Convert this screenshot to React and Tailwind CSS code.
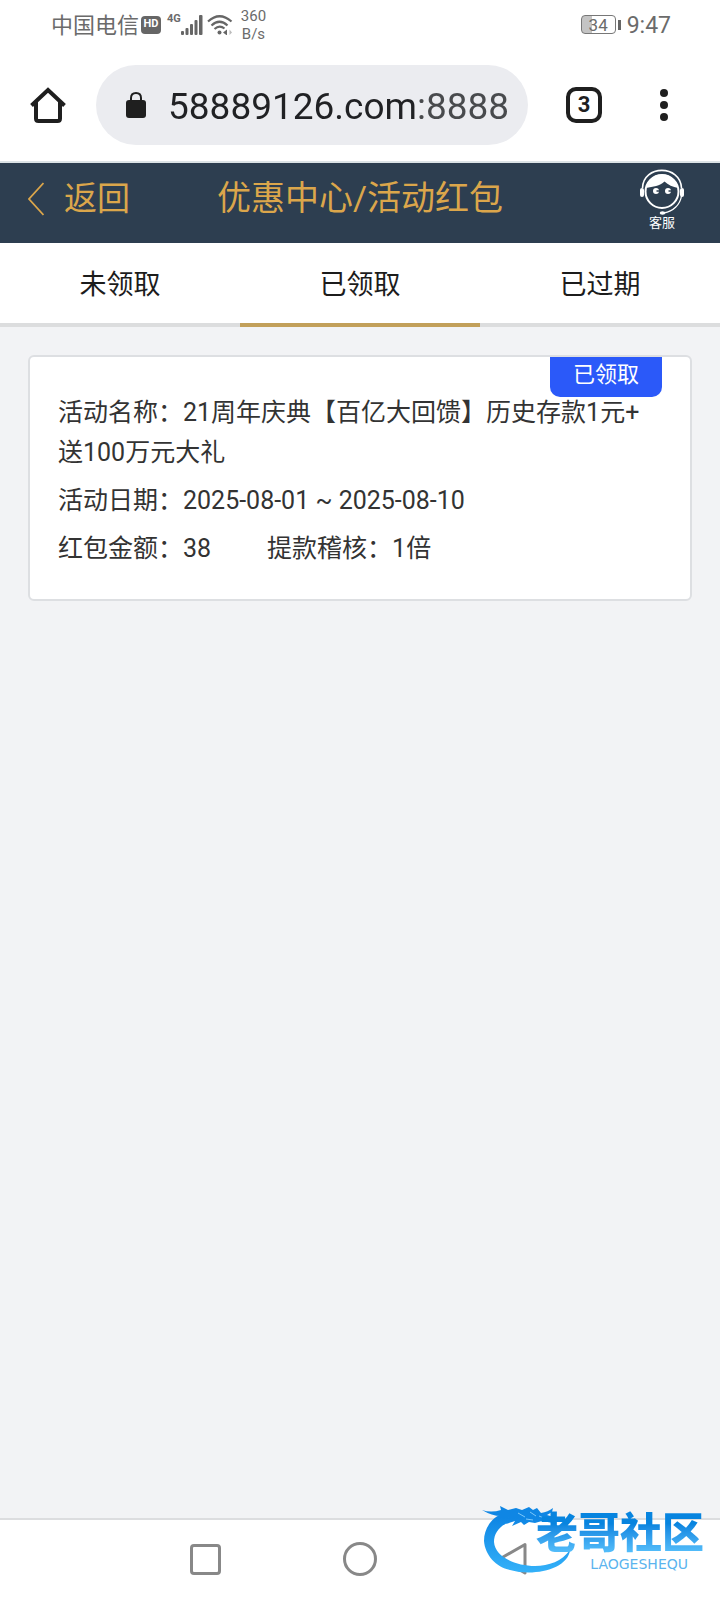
import { useState } from "react";

const TABS = ["未领取", "已领取", "已过期"];

const SANS = "font-['Roboto','Noto_Sans_CJK_SC',sans-serif]";

function StatusBar() {
  return (
    <div className="flex h-[49px] items-center justify-between pl-[51px] pr-[49px] text-[#6b6b6b]">
      <div className="flex items-center">
        <span className="pt-0.5 text-[22px] leading-8">中国电信</span>
        <span className="ml-0.5 flex h-[18px] w-5 items-center justify-center rounded-sm bg-[#666] text-[11px] font-bold text-white">
          HD
        </span>
        <span className="ml-1.5 mb-3 text-[11px] font-bold leading-4">4G</span>
        <svg className="h-5 w-[22px]" viewBox="0 0 22 20" fill="#666">
          <rect x="0" y="16" width="3" height="4" rx="1" />
          <rect x="4.500" y="13" width="3" height="7" rx="1" />
          <rect x="9" y="9" width="3" height="11" rx="1" />
          <rect x="13.500" y="5" width="3" height="15" rx="1" />
          <rect x="18" y="0" width="3.500" height="20" rx="1" />
        </svg>
        <svg className="ml-1 h-5 w-[26px]" viewBox="0 0 26 20" fill="none" stroke="#666" strokeWidth="2.200">
          <path d="M1 6.500Q12.500-4 24.500 6.500" />
          <path d="M4.500 10.500Q12.500 3 20.500 10.500" />
          <path d="M7.500 14Q12.500 9.500 17.500 13.500" />
          <circle cx="12.500" cy="17.500" r="2" fill="#666" stroke="none" />
          <path d="M16 17.500l4-3v6z" fill="#666" stroke="none" />
          <path d="M22.500 14.500l2.500 3l-2.500 2.500z" fill="#bbb" stroke="none" />
        </svg>
        <span className="ml-2 text-center text-[15px] leading-[18px]">
          360
          <br />
          B/s
        </span>
      </div>
      <div className="flex items-center">
        <span className="flex h-[19px] w-[35px] items-center justify-center rounded-sm border border-[#777] bg-linear-to-r from-[#c4c4c4] from-30% to-white to-30% text-[17px] leading-4">
          34
        </span>
        <span className="ml-0.5 h-2.5 w-[3px] bg-[#666]" />
        <span className="ml-1.5 pt-0.5 text-[23px] leading-8">9:47</span>
      </div>
    </div>
  );
}

function BrowserBar() {
  return (
    <div className="flex items-center border-b-2 border-[#dce3e6] py-4 pl-[30px] pr-[46px]">
      <button type="button" aria-label="主页">
        <svg className="h-9 w-9" viewBox="0 0 36 36" fill="none" stroke="#1f1f1f" strokeWidth="4">
          <path d="M6 15V31.500Q6 34 8.500 34H27.500Q30 34 30 31.500V15" />
          <path d="M1.500 18.500L18 3L34.500 18.500" />
        </svg>
      </button>
      <div className="ml-[30px] flex h-20 min-w-0 flex-1 items-center rounded-full bg-[#ebecf0] pl-[30px] pr-[18px]">
        <svg className="h-[26px] w-5 shrink-0" viewBox="0 0 20 26">
          <path d="M5 9V6Q5 1 10 1T15 6V9" fill="none" stroke="#1f1f1f" strokeWidth="2" />
          <rect y="8" width="20" height="18" rx="3" fill="#1f1f1f" />
        </svg>
        <input
          type="text"
          aria-label="网址"
          defaultValue="58889126.com:8888"
          className="ml-[22px] min-w-0 flex-1 bg-[linear-gradient(90deg,#202124_250px,#484a4d_250px)] bg-clip-text pt-1 text-[37px] leading-[48px] text-transparent outline-none"
        />
      </div>
      <button
        type="button"
        aria-label="标签页"
        className="ml-[38px] flex h-9 w-9 items-center justify-center rounded-[10px] border-4 border-[#1f1f1f] text-[22px] font-bold leading-none text-[#1f1f1f]"
      >
        3
      </button>
      <button type="button" aria-label="更多" className="ml-[52px] flex w-5 flex-col items-center gap-1">
        <span className="h-2 w-2 rounded-full bg-[#1f1f1f]" />
        <span className="h-2 w-2 rounded-full bg-[#1f1f1f]" />
        <span className="h-2 w-2 rounded-full bg-[#1f1f1f]" />
      </button>
    </div>
  );
}

function ServiceIcon() {
  return (
    <svg className="h-[46px] w-[46px]" viewBox="0 0 46 46" fill="none" stroke="#fff">
      <path d="M3.500 19C4-4.500 41.500-4.500 42.500 19" strokeWidth="1.600" />
      <circle cx="23" cy="22.500" r="16.500" strokeWidth="2" />
      <path
        d="M7 19C9 10 15 5.500 23 5.500S37 10 39 19C34 18 29 16 25.500 12.500C21 17 14 17.500 7 19Z"
        fill="#fff"
        stroke="none"
      />
      <rect x="1" y="19" width="4" height="9" rx="2" fill="#fff" stroke="none" />
      <rect x="41" y="19" width="4" height="9" rx="2" fill="#fff" stroke="none" />
      <path d="M42.500 27C41 36 34 42.500 25 44" strokeWidth="1.300" />
      <ellipse cx="23.500" cy="44" rx="2.800" ry="1.800" fill="#fff" stroke="none" />
      <circle cx="17" cy="22" r="3" fill="#fff" stroke="none" />
      <circle cx="29" cy="22" r="3" fill="#fff" stroke="none" />
      <path d="M17.500 22H20M29.500 22H32" stroke="#2d3e50" strokeWidth="1.500" />
    </svg>
  );
}

function PageHeader() {
  return (
    <header className="grid h-20 grid-cols-[1fr_auto_1fr] bg-[#2d3e50] px-7 text-[#dba64b]">
      <a href="#back" className="flex h-[71px] items-center gap-5 text-[33px]">
        <svg className="h-[34px] w-4" viewBox="0 0 16 34" fill="none" stroke="currentColor" strokeWidth="1.800">
          <path d="M15.500 1L1 17L15.500 33" />
        </svg>
        返回
      </a>
      <h1 className="flex h-[71px] items-center text-[34px]">优惠中心/活动红包</h1>
      <a href="#service" className="flex flex-col items-center justify-self-end pr-[7px] pt-1.5 text-[13px] leading-4 text-white">
        <ServiceIcon />
        客服
      </a>
    </header>
  );
}

function PromoCard() {
  return (
    <article className="relative mx-7 mt-7 flex flex-col gap-2 rounded-md border-2 border-[#dddfe2] bg-white px-7 pb-[30px] pt-9 text-[25px] leading-10 text-[#333]">
      <span className="absolute right-7 top-0 flex h-10 w-28 justify-center rounded-b-[10px] bg-[#2b59f9] text-[22px] leading-9 text-white">
        已领取
      </span>
      <p>
        活动名称：21周年庆典【百亿大回馈】历史存款1元+
        <wbr />
        送100万元大礼
      </p>
      <p>活动日期：2025-08-01 ~ 2025-08-10</p>
      <p className="flex gap-14">
        <span>红包金额：38</span>
        <span>提款稽核：1倍</span>
      </p>
    </article>
  );
}

function CommunityLogo() {
  return (
    <div className="pointer-events-none absolute bottom-6 right-4 h-[72px] w-[222px]">
      <svg className="absolute inset-0 h-full w-full" viewBox="0 0 222 72">
        <defs>
          <linearGradient id="dragon" x1="0" y1="0" x2="0" y2="72" gradientUnits="userSpaceOnUse">
            <stop offset="0.200" stopColor="#0f86e4" />
            <stop offset="1" stopColor="#36b4fa" />
          </linearGradient>
        </defs>
        <g fill="url(#dragon)">
          <path d="M22 9C10 13 2 24 2 37C3 51 14 63 28 66C52 73 86 65 88 46C80 57 67 62 53 62C34 62 13 53 12 38C12 28 19 20 31 17Z" />
          <path d="M0 6Q9 9 19 6L18 2L26 6L34 4L40 6L47 3L51 6L55 4L59 9Q66 8 71 4L70 8L65 11L72 13L67 14L71 19L60 17L53 19L47 18L42 21L39 18L30 22L33 17L24 20L27 14L19 12Q10 12 0 6Z" />
        </g>
        <path d="M36 9L43 13M48 8L54 12M44 15L51 16M57 12L62 14" stroke="#7cc8fa" strokeWidth="1" fill="none" />
      </svg>
      <div className="absolute right-0 top-3 whitespace-nowrap text-[42px] font-black leading-9">
        <span className="bg-linear-to-b from-[#0784df] from-30% to-[#55bffb] to-90% bg-clip-text text-transparent">
          老哥社区
        </span>
      </div>
      <span className="absolute bottom-1 right-4 font-['DejaVu_Sans',sans-serif] text-[14px] leading-4 text-[#5bb4ee]">
        LAOGESHEQU
      </span>
    </div>
  );
}

function SystemNav() {
  return (
    <nav className="relative flex h-[82px] items-center justify-center gap-[122px] border-t-2 border-[#dcdddf] bg-white pb-0.5">
      <button type="button" aria-label="最近任务" className="flex h-8 w-8 items-center justify-center">
        <span className="h-[31px] w-[31px] rounded-sm border-[3px] border-[#888]" />
      </button>
      <button type="button" aria-label="主屏幕" className="h-[34px] w-[34px] rounded-full border-[3px] border-[#888]" />
      <button type="button" aria-label="返回" className="h-8 w-8">
        <svg className="h-8 w-8" viewBox="0 0 32 32" fill="none" stroke="#888" strokeWidth="3" strokeLinejoin="round">
          <path d="M26 1.500L1.500 15.500L26 30Z" />
        </svg>
      </button>
      <CommunityLogo />
    </nav>
  );
}

export default function App() {
  const [active, setActive] = useState(1);

  return (
    <div className={`flex min-h-screen flex-col bg-white ${SANS}`}>
      <StatusBar />
      <BrowserBar />
      <PageHeader />
      <div role="tablist" className="grid grid-cols-3 bg-white">
        {TABS.map((label, i) => (
          <button
            key={label}
            type="button"
            role="tab"
            aria-selected={i === active}
            onClick={() => setActive(i)}
            className={`h-[84px] border-b-4 pt-1 text-[27px] text-[#1c1c1c] ${
              i === active ? "border-[#c2a05a]" : "border-[#dcddde]"
            }`}
          >
            {label}
          </button>
        ))}
      </div>
      <main className="flex-1 bg-[#f2f3f5]">
        <PromoCard />
      </main>
      <SystemNav />
    </div>
  );
}
